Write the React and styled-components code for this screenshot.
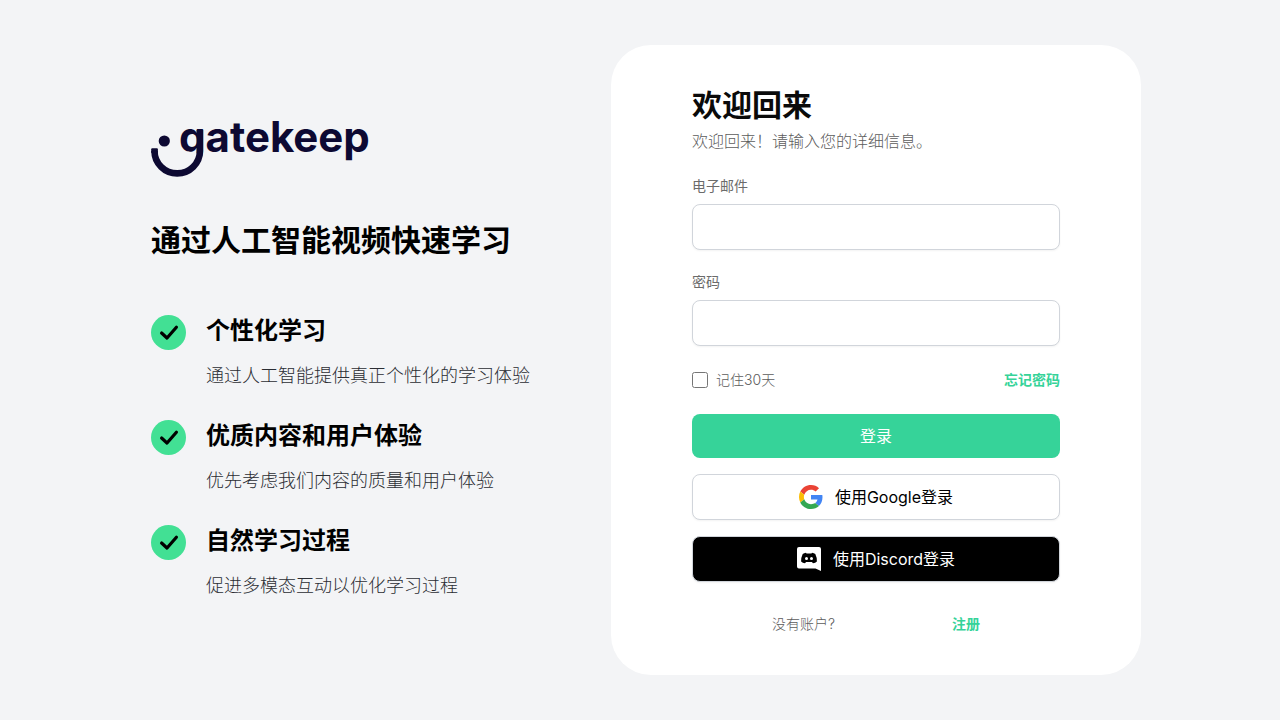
import React, { useState } from "react";
import styled, { createGlobalStyle } from "styled-components";

const GlobalStyle = createGlobalStyle`
  * {
    box-sizing: border-box;
  }
  body {
    margin: 0;
    background: #f3f4f6;
    color: #000;
    font-family: Inter, "Noto Sans CJK SC", sans-serif;
  }
  h1, h2, h3, p, ul {
    margin: 0;
    padding: 0;
  }
`;
const Page = styled.main`
  min-height: 100vh;
  display: flex;
  align-items: center;
  justify-content: center;
  padding: 40px 20px;
`;
const Columns = styled.div`
  width: 100%;
  max-width: 1002px;
  display: flex;
  flex-wrap: wrap;
  align-items: center;
  justify-content: space-between;
  gap: 40px;
`;
const Intro = styled.section`
  padding-left: 12px;
`;
const LogoMark = styled.svg`
  display: block;
  width: 224px;
  height: 56px;
  overflow: visible;
  text {
    font-family: Inter, sans-serif;
    font-size: 42px;
    font-weight: 700;
  }
`;
const Headline = styled.h1`
  margin-top: 45px;
  font-size: 30px;
  line-height: 36px;
  font-weight: 700;
`;
const Features = styled.ul`
  list-style: none;
  margin-top: 57px;
  display: flex;
  flex-direction: column;
  gap: 30px;
`;
const Feature = styled.li`
  display: flex;
  gap: 20px;
`;
const CheckBadge = styled.svg`
  width: 35px;
  height: 35px;
  flex-shrink: 0;
`;
const FeatureTitle = styled.h3`
  font-size: 24px;
  line-height: 32px;
  font-weight: 700;
`;
const FeatureText = styled.p`
  margin-top: 15px;
  font-size: 18px;
  line-height: 28px;
  font-weight: 300;
  color: #2b2d33;
`;
const Card = styled.section`
  width: 100%;
  max-width: 530px;
  padding: 42px 40px 41px;
  border-radius: 40px;
  background: #fff;
`;
const Form = styled.form`
  max-width: 368px;
  margin: 0 auto;
  font-size: 14px;
  line-height: 20px;
`;
const Title = styled.h2`
  font-size: 30px;
  line-height: 36px;
  font-weight: 700;
  color: #0a0a0a;
`;
const Subtitle = styled.p`
  margin-top: 5px;
  font-size: 16px;
  line-height: 26px;
  font-weight: 300;
  color: #5c5c5c;
`;
const Field = styled.div`
  margin-top: 22px;
  display: flex;
  flex-direction: column;
  gap: 8px;
`;
const Label = styled.label`
  font-weight: 400;
  color: #6b6b6b;
`;
const Input = styled.input`
  width: 100%;
  height: 46px;
  padding: 0 12px;
  border: 1px solid #d1d5db;
  border-radius: 8px;
  background: #fff;
  font: inherit;
  box-shadow: 0 1px 2px rgba(0, 0, 0, 0.05);
`;
const Options = styled.div`
  margin-top: 24px;
  display: flex;
  align-items: center;
  justify-content: space-between;
`;
const Remember = styled.label`
  display: flex;
  align-items: center;
  gap: 8px;
  font-weight: 300;
  color: #5c5c5c;
`;
const Checkbox = styled.input`
  width: 16px;
  height: 16px;
  margin: 0;
`;
const Link = styled.a`
  font-weight: 700;
  color: #36d399;
  text-decoration: none;
`;
const Buttons = styled.div`
  margin-top: 24px;
  display: flex;
  flex-direction: column;
  gap: 16px;
`;
const Button = styled.button`
  height: 46px;
  display: flex;
  align-items: center;
  justify-content: center;
  gap: 12px;
  border: 1px solid #d1d5db;
  border-radius: 8px;
  background: ${(props) => (props.$dark ? "#000" : "#fff")};
  color: ${(props) => (props.$dark ? "#fff" : "#000")};
  font-family: inherit;
  font-size: 16px;
  line-height: 24px;
  font-weight: 400;
  box-shadow: 0 1px 2px rgba(0, 0, 0, 0.05);
  cursor: pointer;
  svg {
    width: 24px;
    height: 24px;
  }
`;
const SubmitButton = styled(Button)`
  height: 44px;
  border: none;
  background: #36d399;
  color: #fff;
  box-shadow: none;
`;
const Footer = styled.div`
  margin-top: 32px;
  padding: 0 80px;
  display: flex;
  justify-content: space-between;
`;
const Muted = styled.span`
  font-weight: 300;
  color: #5c5c5c;
`;

const features = [
  { title: "个性化学习", text: "通过人工智能提供真正个性化的学习体验" },
  { title: "优质内容和用户体验", text: "优先考虑我们内容的质量和用户体验" },
  { title: "自然学习过程", text: "促进多模态互动以优化学习过程" },
];

const Logo = () => (
  <LogoMark viewBox="0 0 224 56" fill="#0d0932" role="img" aria-label="gatekeep">
    <text x="28" y="31">
      gatekeep
    </text>
    <path fill="#f3f4f6" d="M26 32H49C49 44 39 52 26 52Z" />
    <circle cx="13.3" cy="20" r="5.6" />
    <path
      d="M3.5 30A22.7 22.4 0 0 0 48.9 30V9"
      fill="none"
      stroke="#0d0932"
      strokeWidth="6.6"
    />
    <rect x="0.2" y="27.3" width="6.7" height="5" rx="1" />
  </LogoMark>
);

const Check = () => (
  <CheckBadge viewBox="0 0 35 35" aria-hidden="true">
    <circle cx="17.5" cy="17.5" r="17.5" fill="#42e094" />
    <path
      d="M10.6 18L16 23L25.4 12.2"
      fill="none"
      stroke="#000"
      strokeWidth="3.2"
      strokeLinecap="round"
      strokeLinejoin="round"
    />
  </CheckBadge>
);

const GoogleIcon = () => (
  <svg viewBox="0 0 48 48" aria-hidden="true">
    <path fill="#EA4335" d="M24 9.5c3.54 0 6.71 1.22 9.21 3.6l6.85-6.85C35.9 2.38 30.47 0 24 0 14.62 0 6.51 5.38 2.56 13.22l7.98 6.19C12.43 13.72 17.74 9.5 24 9.5z" />
    <path fill="#4285F4" d="M46.98 24.55c0-1.57-.15-3.09-.38-4.55H24v9.02h12.94c-.58 2.96-2.26 5.48-4.78 7.18l7.73 6c4.51-4.18 7.09-10.36 7.09-17.65z" />
    <path fill="#FBBC05" d="M10.53 28.59c-.48-1.45-.76-2.99-.76-4.59s.27-3.14.76-4.59l-7.98-6.19C.92 16.46 0 20.12 0 24c0 3.88.92 7.54 2.56 10.78l7.97-6.19z" />
    <path fill="#34A853" d="M24 48c6.48 0 11.93-2.13 15.89-5.81l-7.73-6c-2.15 1.45-4.92 2.3-8.16 2.3-6.26 0-11.57-4.22-13.47-9.91l-7.98 6.19C6.51 42.62 14.62 48 24 48z" />
  </svg>
);

const DiscordIcon = () => (
  <svg viewBox="0 0 24 24" aria-hidden="true">
    <path fill="#fff" d="M2 0H22Q24 0 24 2V24L18.5 21.5H2Q0 21.5 0 19.5V2Q0 0 2 0Z" />
    <path fill="#000" d="M9 5.8Q7 6.1 5.7 7.1Q4 10.5 4.1 14.6Q5.6 16.3 8 16.3L9.1 15.1H14.9L16 16.3Q18.4 16.3 19.9 14.6Q20 10.5 18.3 7.1Q17 6.1 15 5.8L14.5 6.6H9.5Z" />
    <circle cx="9.5" cy="11.6" r="1.5" fill="#fff" />
    <circle cx="14.5" cy="11.6" r="1.5" fill="#fff" />
  </svg>
);

const App = () => {
  const [remember, setRemember] = useState(false);
  return (
    <Page>
      <GlobalStyle />
      <Columns>
        <Intro>
          <Logo />
          <Headline>通过人工智能视频快速学习</Headline>
          <Features>
            {features.map((item) => (
              <Feature key={item.title}>
                <Check />
                <div>
                  <FeatureTitle>{item.title}</FeatureTitle>
                  <FeatureText>{item.text}</FeatureText>
                </div>
              </Feature>
            ))}
          </Features>
        </Intro>
        <Card>
          <Form onSubmit={(e) => e.preventDefault()}>
            <Title>欢迎回来</Title>
            <Subtitle>欢迎回来！请输入您的详细信息。</Subtitle>
            <Field>
              <Label htmlFor="email">电子邮件</Label>
              <Input id="email" type="email" />
            </Field>
            <Field>
              <Label htmlFor="password">密码</Label>
              <Input id="password" type="password" />
            </Field>
            <Options>
              <Remember>
                <Checkbox
                  type="checkbox"
                  checked={remember}
                  onChange={(e) => setRemember(e.target.checked)}
                />
                记住30天
              </Remember>
              <Link href="#forgot">忘记密码</Link>
            </Options>
            <Buttons>
              <SubmitButton type="submit">登录</SubmitButton>
              <Button type="button">
                <GoogleIcon />
                使用Google登录
              </Button>
              <Button type="button" $dark>
                <DiscordIcon />
                使用Discord登录
              </Button>
            </Buttons>
            <Footer>
              <Muted>没有账户?</Muted>
              <Link href="#signup">注册</Link>
            </Footer>
          </Form>
        </Card>
      </Columns>
    </Page>
  );
};

export default App;
